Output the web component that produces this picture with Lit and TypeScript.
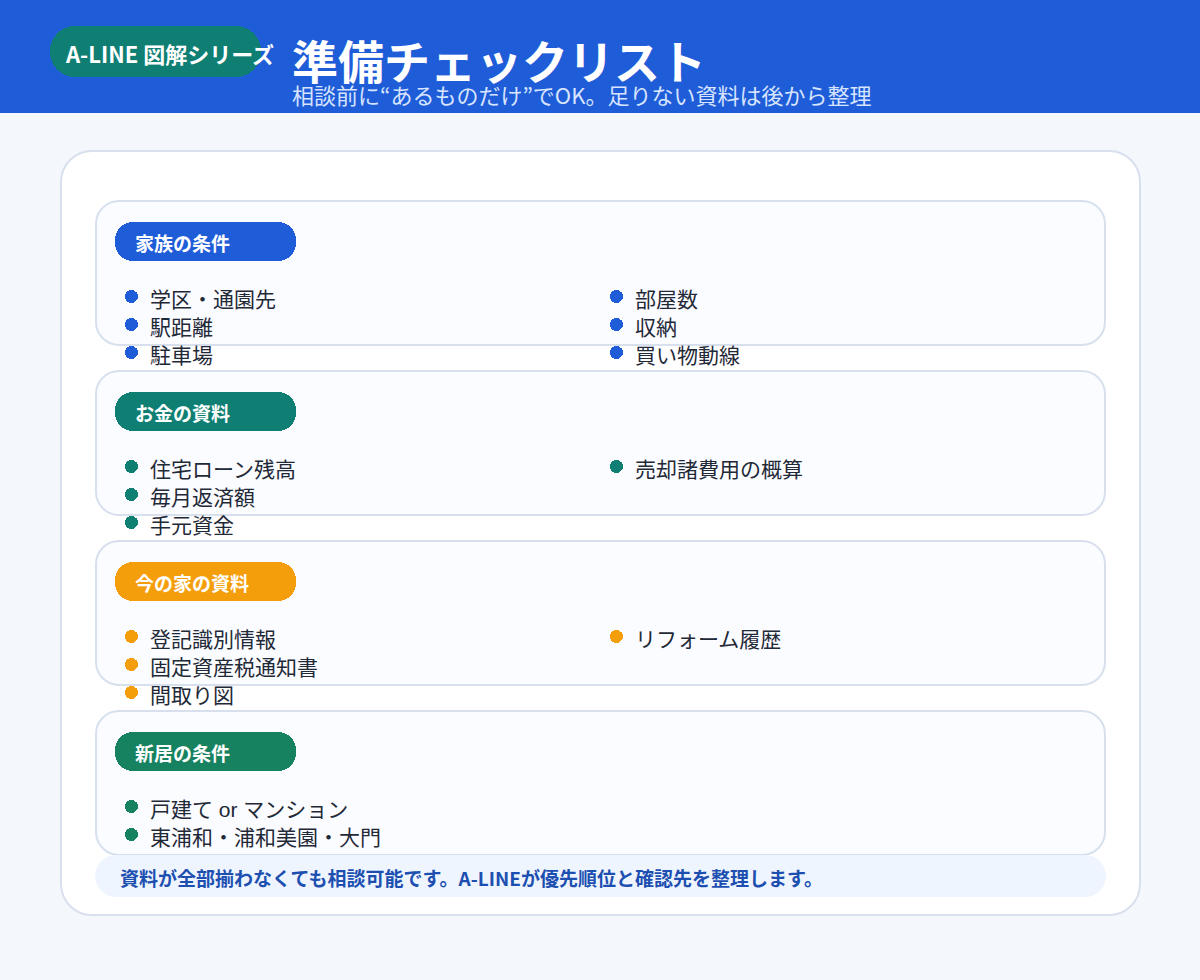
import { LitElement, html, css } from "lit";
import { customElement } from "lit/decorators.js";

const SECTIONS = [
  {
    title: "家族の条件",
    color: "#1f5cd8",
    left: ["学区・通園先", "駅距離", "駐車場"],
    right: ["部屋数", "収納", "買い物動線"],
  },
  {
    title: "お金の資料",
    color: "#0f7f74",
    left: ["住宅ローン残高", "毎月返済額", "手元資金"],
    right: ["売却諸費用の概算"],
  },
  {
    title: "今の家の資料",
    color: "#f59e0b",
    left: ["登記識別情報", "固定資産税通知書", "間取り図"],
    right: ["リフォーム履歴"],
  },
  {
    title: "新居の条件",
    color: "#17825f",
    left: ["戸建て or マンション", "東浦和・浦和美園・大門"],
    right: [],
  },
];

@customElement("app-root")
export class AppRoot extends LitElement {
  static styles = css`
    :host {
      display: block;
      height: 980px;
      background: #f4f7fc;
      font-family: "Liberation Sans", "Noto Sans CJK JP", sans-serif;
      color: #1f2937;
    }
    .top {
      height: 113px;
      box-sizing: border-box;
      background: #1f5cd8;
      padding: 26px 50px 0;
      display: flex;
      align-items: flex-start;
      gap: 31px;
      overflow: hidden;
    }
    .badge {
      flex: none;
      position: relative;
      width: 211px;
      height: 51px;
      box-sizing: border-box;
      padding-left: 16px;
      color: #fff;
      font-family: "Noto Sans CJK JP", sans-serif;
      font-size: 22px;
      font-weight: 700;
      line-height: 54px;
      white-space: nowrap;
    }
    .shape {
      position: absolute;
      left: 0;
      top: 0;
      z-index: 0;
    }
    .label {
      position: relative;
      z-index: 1;
    }
    .head {
      display: flex;
      flex-direction: column;
    }
    h1 {
      margin: 0;
      padding-top: 10px;
      color: #fff;
      font-family: "Noto Sans CJK JP", sans-serif;
      font-size: 46px;
      font-weight: 700;
      line-height: 46px;
      white-space: nowrap;
    }
    .sub {
      margin-top: -1px;
      color: #d6e4ff;
      font-family: "Noto Sans CJK JP", sans-serif;
      font-size: 22px;
      line-height: 26px;
      white-space: nowrap;
    }
    .main {
      padding: 37px 59px 0 60px;
    }
    .card {
      height: 766px;
      box-sizing: border-box;
      padding: 48px 33px 0;
      background: #fff;
      border: 2px solid #d8e0ee;
      border-radius: 32px;
      display: flex;
      flex-direction: column;
    }
    .section {
      flex: none;
      height: 146px;
      box-sizing: border-box;
      margin-bottom: 24px;
      padding: 20px 18px 0;
      background: #fbfcff;
      border: 2px solid #d8e0ee;
      border-radius: 24px;
    }
    .section:nth-child(4) {
      margin-bottom: 0;
    }
    .pill {
      position: relative;
      width: 181px;
      height: 39px;
      box-sizing: border-box;
      padding-left: 20px;
      color: #fff;
      font-family: "Noto Sans CJK JP", sans-serif;
      font-size: 19px;
      font-weight: 700;
      line-height: 42px;
      white-space: nowrap;
    }
    .cols {
      display: grid;
      grid-template-columns: 485px 1fr;
      margin-top: 26px;
    }
    ul {
      list-style: none;
      margin: 0;
      padding: 0 0 0 10px;
    }
    li {
      display: flex;
      height: 28px;
      font-size: 21px;
      line-height: 26px;
      white-space: nowrap;
    }
    .dot {
      flex: none;
      display: block;
      margin: 3px 12px 0 0;
    }
    .note {
      flex: none;
      height: 42px;
      margin-top: -1px;
      padding-left: 25px;
      border-radius: 21px;
      background: #eef5ff;
      color: #1d4fb0;
      font-family: "Noto Sans CJK JP", sans-serif;
      font-size: 19px;
      font-weight: 700;
      line-height: 46px;
      white-space: nowrap;
    }
  `;

  // rounded shape behind a label, crisp edges like the reference
  renderShape(w: number, h: number, r: number, color: string) {
    return html`<svg class="shape" width=${w} height=${h} shape-rendering="crispEdges">
      <rect width=${w} height=${h} rx=${r} fill=${color}></rect>
    </svg>`;
  }

  renderList(items: string[], color: string) {
    return html`
      <ul>
        ${items.map(
          (t) => html`<li>
            <svg class="dot" width="13" height="13" shape-rendering="crispEdges">
              <circle cx="6.5" cy="6.5" r="6.5" fill=${color}></circle>
            </svg>
            ${t}
          </li>`
        )}
      </ul>
    `;
  }

  render() {
    return html`
      <div class="top">
        <div class="badge">
          ${this.renderShape(211, 51, 25, "#0f7f74")}
          <span class="label">A-LINE 図解シリーズ</span>
        </div>
        <div class="head">
          <h1>準備チェックリスト</h1>
          <div class="sub">相談前に“あるものだけ”でOK。足りない資料は後から整理</div>
        </div>
      </div>
      <div class="main">
        <div class="card">
          ${SECTIONS.map(
            (s) => html`
              <div class="section">
                <div class="pill">
                  ${this.renderShape(181, 39, 18, s.color)}
                  <span class="label">${s.title}</span>
                </div>
                <div class="cols">
                  ${this.renderList(s.left, s.color)}
                  ${this.renderList(s.right, s.color)}
                </div>
              </div>
            `
          )}
          <div class="note">
            資料が全部揃わなくても相談可能です。A-LINEが優先順位と確認先を整理します。
          </div>
        </div>
      </div>
    `;
  }
}
